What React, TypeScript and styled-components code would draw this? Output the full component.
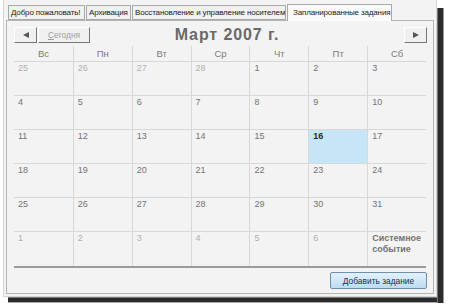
import React from 'react';
import styled, { createGlobalStyle } from 'styled-components';

const GlobalStyle = createGlobalStyle`
  html, body {
    margin: 0;
    padding: 0;
    background: #ffffff;
    font-family: 'Liberation Sans', Arial, sans-serif;
  }
`;

const tabs = [
  { title: 'Добро пожаловать!', width: 77 },
  { title: 'Архивация', width: 45 },
  { title: 'Восстановление и управление носителем', width: 154 },
  { title: 'Запланированные задания', width: 105, active: true },
];

const days = ['Вс', 'Пн', 'Вт', 'Ср', 'Чт', 'Пт', 'Сб'];

type Kind = 'other' | 'month' | 'today' | 'event';
type Cell = { label: string; kind: Kind };

const row = (labels: string[], kind: Kind): Cell[] => labels.map((label) => ({ label, kind }));

const weeks: Cell[][] = [
  [...row(['25', '26', '27', '28'], 'other'), ...row(['1', '2', '3'], 'month')],
  row(['4', '5', '6', '7', '8', '9', '10'], 'month'),
  [
    ...row(['11', '12', '13', '14', '15'], 'month'),
    { label: '16', kind: 'today' },
    { label: '17', kind: 'month' },
  ],
  row(['18', '19', '20', '21', '22', '23', '24'], 'month'),
  row(['25', '26', '27', '28', '29', '30', '31'], 'month'),
  [...row(['1', '2', '3', '4', '5', '6'], 'other'), { label: 'Системное событие', kind: 'event' }],
];

export default function App() {
  return (
    <>
      <GlobalStyle />
      <Frame>
        <Window>
          <TabStrip>
            {tabs.map((t) => (
              <Tab key={t.title} $active={!!t.active} $width={t.width}>
                {t.title}
              </Tab>
            ))}
          </TabStrip>
          <Panel>
            <NavRow>
              <NavButton $width={23}>
                <Arrow $dir="left" />
              </NavButton>
              <NavButton $width={52} disabled>
                <u>С</u>егодня
              </NavButton>
              <Title>Март 2007 г.</Title>
              <NavButton $width={23}>
                <Arrow $dir="right" />
              </NavButton>
            </NavRow>
            <Grid>
              {days.map((d) => (
                <DayHead key={d}>{d}</DayHead>
              ))}
              {weeks.flat().map((c, i) => (
                <DateCell key={i} $kind={c.kind}>
                  {c.label}
                </DateCell>
              ))}
            </Grid>
            <Footer>
              <AddButton>Добавить задание</AddButton>
            </Footer>
          </Panel>
        </Window>
        <RightShadow />
        <BottomShadow />
      </Frame>
    </>
  );
}

// window plus its dark drop shadow strips on the right and bottom
const Frame = styled.div`
  margin-left: 3px;
  display: grid;
  grid-template-columns: 434px 7px;
  grid-template-rows: 297px 6px;
  width: 441px;
  height: 303px;
`;

const RightShadow = styled.div`
  grid-column: 2;
  grid-row: 1 / span 2;
  margin-top: 8px;
  background-color: #2b2b2b;
  border-left: 1px solid #777;
  border-right: 1px solid #999;
`;

const BottomShadow = styled.div`
  grid-column: 1;
  grid-row: 2;
  margin-left: 5px;
  background-color: #2b2b2b;
  border-top: 1px solid #777;
  border-bottom: 1px solid #aaa;
`;

const Window = styled.div`
  grid-column: 1;
  grid-row: 1;
  box-sizing: border-box;
  background: #f3f3f3;
  border: 1px solid #d4d4d4;
  border-top: none;
  padding: 3px 2px 0 2px;
  display: flex;
  flex-direction: column;
`;

const TabStrip = styled.div`
  display: flex;
  align-items: flex-end;
  height: 17px;
  padding-left: 2px;
  gap: 1px;
`;

const Tab = styled.div<{ $active: boolean; $width: number }>`
  box-sizing: border-box;
  width: ${(p) => p.$width}px;
  height: ${(p) => (p.$active ? 17 : 15)}px;
  margin-bottom: ${(p) => (p.$active ? -1 : 0)}px;
  background: ${(p) => (p.$active ? '#fafafa' : '#f1f1f1')};
  border: 1px solid #a9a9a9;
  border-bottom: ${(p) => (p.$active ? 'none' : '1px solid #a9a9a9')};
  font-size: 8px;
  letter-spacing: -0.15px;
  color: #222;
  white-space: nowrap;
  overflow: hidden;
  padding-left: ${(p) => (p.$active ? 5 : 2)}px;
  line-height: ${(p) => (p.$active ? 15 : 13)}px;
  position: relative;
  z-index: ${(p) => (p.$active ? 1 : 0)};
`;

const Panel = styled.div`
  flex: 1;
  margin-bottom: 2px;
  border: 1px solid #b4b4b4;
  background: #f3f3f3;
  padding: 6px 6px 0 7px;
  display: flex;
  flex-direction: column;
`;

const NavRow = styled.div`
  display: flex;
  align-items: center;
  height: 16px;
  gap: 1px;
`;

const NavButton = styled.button<{ $width: number }>`
  box-sizing: border-box;
  width: ${(p) => p.$width}px;
  height: 16px;
  padding: 0;
  background: #f0f0f0;
  border: 1px solid;
  border-color: #ffffff #777777 #777777 #ffffff;
  font-family: 'Liberation Sans', Arial, sans-serif;
  font-size: 8.4px;
  color: #a0a0a0;
  display: flex;
  align-items: center;
  justify-content: center;
`;

const Arrow = styled.span<{ $dir: 'left' | 'right' }>`
  display: block;
  width: 0;
  height: 0;
  border-top: 3px solid transparent;
  border-bottom: 3px solid transparent;
  ${(p) => (p.$dir === 'left' ? 'border-right: 6px solid #555;' : 'border-left: 6px solid #555;')}
`;

const Title = styled.div`
  flex: 1;
  text-align: center;
  font-size: 16px;
  font-weight: bold;
  color: #6a6a6a;
  padding-right: 40px;
  letter-spacing: 0.9px;
`;

const Grid = styled.div`
  margin-top: 3px;
  display: grid;
  grid-template-columns: repeat(7, 1fr);
  grid-template-rows: 16px repeat(6, 34px);
  width: 412px;
  border-bottom: 2px solid #9a9a9a;
`;

const DayHead = styled.div`
  border-left: 1px solid #d8d8d8;
  border-bottom: 1px solid #d8d8d8;
  font-size: 9.5px;
  color: #7a7a7a;
  text-align: center;
  line-height: 15px;
  &:first-child {
    border-left: none;
  }
`;

const DateCell = styled.div<{ $kind: Kind }>`
  border-left: 1px solid #d8d8d8;
  border-bottom: 1px solid #d8d8d8;
  padding: 1px 0 0 4px;
  font-size: 9px;
  line-height: 11px;
  color: ${(p) =>
    p.$kind === 'other' ? '#b0b0b0' : p.$kind === 'today' ? '#2a2a2a' : '#747474'};
  font-weight: ${(p) => (p.$kind === 'today' || p.$kind === 'event' ? 'bold' : 'normal')};
  background: ${(p) => (p.$kind === 'today' ? '#c6e6f8' : 'transparent')};
  &:nth-child(7n + 1) {
    border-left: none;
  }
  &:nth-last-child(-n + 7) {
    border-bottom: none;
  }
`;

const Footer = styled.div`
  display: flex;
  justify-content: flex-end;
  padding-top: 4px;
`;

const AddButton = styled.button`
  box-sizing: border-box;
  width: 97px;
  height: 17px;
  padding: 0;
  border: 1px solid #6f8fae;
  border-radius: 2px;
  background: linear-gradient(#e4f1fb, #bcdcf3);
  font-family: 'Liberation Sans', Arial, sans-serif;
  font-size: 8.4px;
  color: #1f2f3f;
`;
